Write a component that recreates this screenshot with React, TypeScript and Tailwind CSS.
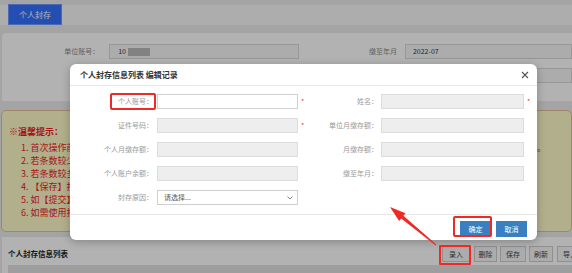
import React from 'react';

const font = { fontFamily: '"Noto Sans CJK SC", "Noto Sans", sans-serif' };

// only the part of each tip line that shows left of the dialog
const tips = ['2. 若条数较少', '3. 若条数较多', '4. 【保存】按', '5. 如【提交】', '6. 如需使用批'];

const toolbar = [
  { name: '录入', w: 'w-[28px]', ml: 'ml-0' },
  { name: '删除', w: 'w-[23px]', ml: 'ml-[4px]' },
  { name: '保存', w: 'w-[26px]', ml: 'ml-[3px]' },
  { name: '刷新', w: 'w-[24px]', ml: 'ml-[3px]' },
  { name: '导入', w: 'w-[26px]', ml: 'ml-[4px]' },
];

function Star({ show }: { show: boolean }) {
  return (
    <span className="w-[13px] pl-[3px] text-[7px] leading-none text-[#ff2a2a]">{show ? '*' : ''}</span>
  );
}

function GrayInput({ w }: { w: string }) {
  return <div className={`${w} h-[15px] bg-[#eeeeee] border border-[#dcdcdc]`} />;
}

function FormRow({
  left,
  right,
  leftStar,
  rightStar,
  leftField,
}: {
  left: string;
  right?: string;
  leftStar?: boolean;
  rightStar?: boolean;
  leftField?: React.ReactNode;
}) {
  return (
    <div className="flex items-center h-[15px]">
      <div className="w-[87px] pr-[4px] text-right text-[7px] text-[#9a9a9a] whitespace-nowrap">{left}：</div>
      {leftField ?? <GrayInput w="w-[141px]" />}
      <Star show={!!leftStar} />
      <div className="w-[70px] pr-[3px] text-right text-[7px] text-[#9a9a9a] whitespace-nowrap">{right ? `${right}：` : ''}</div>
      {right ? <GrayInput w="w-[143px]" /> : null}
      {right ? <Star show={!!rightStar} /> : null}
    </div>
  );
}

export default function App() {
  return (
    <div className="relative w-[572px] h-[273px] overflow-hidden bg-[#ebebeb]" style={font}>
      {/* tab strip */}
      <div className="mt-[5px] h-[20px] bg-[#f8f8f8] flex">
        <div className="ml-[8px] -mt-[1px] w-[54px] h-[21px] bg-[#3470ff] border border-[#6d97ff] text-white text-[8px] flex items-center justify-center">
          个人封存
        </div>
      </div>

      {/* query panel */}
      <div className="mt-[8px] ml-[2px] h-[68px] bg-white rounded-tl-[4px] pt-[11px] flex flex-col gap-[9px]">
        {[
          { a: '单位账号：', av: '10', b: '缴至年月', bv: '2022-07' },
          { a: '', av: '', b: '', bv: '' },
        ].map((r, i) => (
          <div key={i} className="flex items-center h-[15px] text-[7px]">
            <div className="w-[99px] text-right text-[#8a8a8a]">{r.a}</div>
            <div className="ml-[10px] w-[193px] h-[15px] border border-[#d8d8d8] bg-[#f7f7f7] pl-[8px] flex items-center text-[#333]">
              {r.av}
              {r.av ? <span className="ml-[2px] w-[22px] h-[8px] bg-[#bbbbbb]" /> : null}
            </div>
            <div className="w-[100px] text-right text-[#8a8a8a]">{r.b}</div>
            <div className="ml-[8px] w-[170px] h-[15px] border border-[#d8d8d8] bg-[#f7f7f7] pl-[7px] flex items-center text-[#333]">
              {r.bv}
            </div>
          </div>
        ))}
      </div>

      {/* tips */}
      <div className="mt-[9px] ml-[1px] h-[122px] bg-[#fffbc9] border border-[#e6bf95] rounded-[5px] pt-[14px] pr-[25px] text-[9px] text-[#f01c1c] leading-[13px]">
        <div className="pl-[7px] font-bold">※温馨提示：</div>
        <div className="pl-[19px] mt-[3px]">
          <div className="flex justify-between whitespace-nowrap">
            <span>1. 首次操作前</span>
            <span>9。</span>
          </div>
          {tips.map((t) => (
            <div key={t} className="whitespace-nowrap">{t}</div>
          ))}
        </div>
      </div>

      {/* list panel */}
      <div className="mt-[5px] ml-[2px] h-[40px] bg-white pt-[9px] overflow-hidden">
        <div className="flex items-center h-[16px]">
          <div className="w-[440px] shrink-0 pl-[6px] text-[7.5px] font-bold text-[#222]">个人封存信息列表</div>
          {toolbar.map((b) => (
            <div
              key={b.name}
              className={`${b.w} ${b.ml} h-[16px] border border-[#cfcfcf] bg-[#f6f6f6] text-[7px] text-[#444] flex items-center justify-center shrink-0`}
            >
              {b.name}
            </div>
          ))}
        </div>
        <div className="mt-[3px] ml-[6px] h-[12px] bg-[#e2e2e2]" />
      </div>

      {/* mask */}
      <div className="absolute inset-0 bg-black/30" />

      {/* modal */}
      <div className="absolute left-[70px] top-[64px] w-[467px] h-[176px] bg-white rounded-[6px] shadow-[0_2px_8px_rgba(0,0,0,0.25)] flex flex-col">
        <div className="h-[22px] border-b border-[#e8e8e8] flex items-center justify-between pl-[10px] pr-[8px]">
          <span className="text-[8px] font-bold text-[#333]">个人封存信息列表 编辑记录</span>
          <svg width="8" height="8" viewBox="0 0 8 8">
            <path d="M1 1 L7 7 M7 1 L1 7" stroke="#555" strokeWidth="1.1" />
          </svg>
        </div>
        <div className="pt-[8px] pb-[9px] flex flex-col gap-[9px]">
          <FormRow
            left="个人账号"
            right="姓名"
            leftStar
            rightStar
            leftField={<div className="w-[141px] h-[15px] bg-white border border-[#d0d0d0]" />}
          />
          <FormRow left="证件号码" right="单位月缴存额" leftStar />
          <FormRow left="个人月缴存额" right="月缴存额" />
          <FormRow left="个人账户余额" right="缴至年月" />
          <FormRow
            left="封存原因"
            leftField={
              <div className="w-[141px] h-[15px] bg-white border border-[#cfcfcf] flex items-center justify-between pl-[6px] pr-[4px]">
                <span className="text-[7px] text-[#555]">请选择...</span>
                <svg width="6" height="4" viewBox="0 0 6 4">
                  <path d="M0.5 0.5 L3 3 L5.5 0.5" stroke="#777" strokeWidth="0.9" fill="none" />
                </svg>
              </div>
            }
          />
        </div>
        <div className="flex-1 border-t border-[#e8e8e8] flex justify-end items-start pt-[6px] pr-[10px] gap-[5px]">
          <div className="w-[31px] h-[16px] bg-[#3a7fc0] text-white text-[7px] flex items-center justify-center">确定</div>
          <div className="w-[31px] h-[16px] bg-[#3a7fc0] text-white text-[7px] flex items-center justify-center">取消</div>
        </div>
      </div>

      {/* annotations */}
      <div className="absolute left-[110px] top-[93px] w-[46px] h-[17px] border-2 border-[#ee2a24] rounded-[2px]" />
      <div className="absolute left-[453px] top-[216px] w-[39px] h-[21px] border-2 border-[#ee2a24] rounded-[2px]" />
      <div className="absolute left-[439px] top-[245px] w-[32px] h-[20px] border-2 border-[#ee2a24] rounded-[1px]" />
      <svg className="absolute left-0 top-0" width="572" height="273" viewBox="0 0 572 273">
        <polygon
          points="390,207 405.5,213.3 403.4,215.8 436.3,244.6 435.7,245.4 401.2,218.6 399.1,221.1"
          fill="#ee2a24"
        />
      </svg>
    </div>
  );
}
